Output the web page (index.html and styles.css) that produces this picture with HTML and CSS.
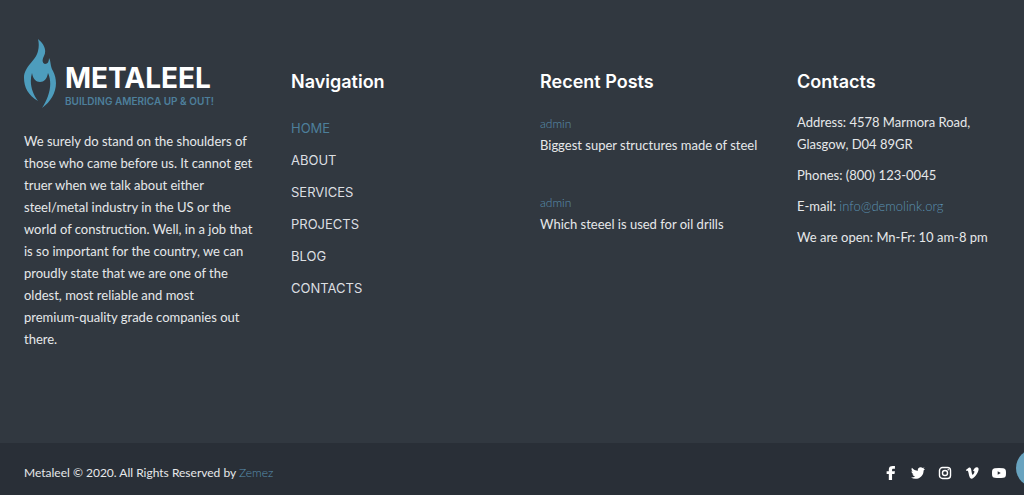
FILE: index.html
```html
<!DOCTYPE html>
<html lang="en">
<head>
    <meta charset="UTF-8">
    <meta name="viewport" content="width=device-width, initial-scale=1.0">
    <title>Metaleel</title>
    <link rel="stylesheet" href="styles.css">
</head>
<body>
    <footer class="footer">
        <div class="footer-main">
            <div class="footer-about">
                <a class="brand" href="#">
                    <svg class="brand-flame" viewBox="0 0 32 69" aria-hidden="true">
                        <path d="M14 0C20 5 23 11 20 17C18 21 18 24 21 25C24 25 25 22 25 19C27 22 26 27 29 32C36 46 30 60 18 69C25 58 29 45 24 34C23 40 20 43 16 43C12 43 9 40 8 34C5 44 8 54 14 62C4 56 0 48 0 39C0 27 12 22 14 12C15 8 15 4 14 0Z"/>
                    </svg>
                    <span class="brand-text">
                        <span class="brand-name">METALEEL</span>
                        <span class="brand-slogan">BUILDING AMERICA UP &amp; OUT!</span>
                    </span>
                </a>
                <p>We surely do stand on the shoulders of those who came before us. It cannot get truer when we talk about either steel/metal industry in the US or the world of construction. Well, in a job that is so important for the country, we can proudly state that we are one of the oldest, most reliable and most <span class="nowrap">premium-quality</span> grade companies out there.</p>
            </div>

            <nav class="footer-col">
                <h2>Navigation</h2>
                <ul class="nav-list">
                    <li><a class="active" href="#">HOME</a></li>
                    <li><a href="#">ABOUT</a></li>
                    <li><a href="#">SERVICES</a></li>
                    <li><a href="#">PROJECTS</a></li>
                    <li><a href="#">BLOG</a></li>
                    <li><a href="#">CONTACTS</a></li>
                </ul>
            </nav>

            <div class="footer-col">
                <h2>Recent Posts</h2>
                <article class="post">
                    <a class="post-author" href="#">admin</a>
                    <a class="post-title" href="#">Biggest super structures made of steel</a>
                </article>
                <article class="post">
                    <a class="post-author" href="#">admin</a>
                    <a class="post-title" href="#">Which steeel is used for oil drills</a>
                </article>
            </div>

            <div class="footer-col contacts">
                <h2>Contacts</h2>
                <p>Address: 4578 Marmora Road, Glasgow, D04 89GR</p>
                <p>Phones: (800) 123-0045</p>
                <p>E-mail: <a href="mailto:info@demolink.org">info@demolink.org</a></p>
                <p>We are open: Mn-Fr: 10 am-8 pm</p>
            </div>
        </div>

        <div class="footer-bottom">
            <p>Metaleel © 2020. All Rights Reserved by <a href="#">Zemez</a></p>
            <div class="social">
                <a href="#" aria-label="Facebook">
                    <svg viewBox="0 0 16 16"><path d="M5.500 16V9H3V6H5.500V4C5.500 1.300 7 0 10 0H12.500V3H10.800C9.600 3 9.200 3.500 9.200 4.500V6H12.500L12 9H9.200V16Z"/></svg>
                </a>
                <a href="#" aria-label="Twitter">
                    <svg viewBox="0 0 16 16"><path d="M16 3.500L14.400 5C14.500 10 10.900 14.500 5 14.500C3.200 14.500 1.500 14 0 13.100C1.800 13.200 3.400 12.700 4.700 11.700C3.200 11.600 2.100 10.700 1.700 9.400H3.100C1.500 9 .500 7.700 .500 6.100L2 6.500C.500 5.400 .200 3.600 1.100 2.100C2.800 4.200 5.200 5.400 7.900 5.500C7.300 3 9 1.400 11 1.400C12 1.400 12.800 1.800 13.400 2.400L15.500 1.600L14.100 3.400Z"/></svg>
                </a>
                <a href="#" aria-label="Instagram">
                    <svg viewBox="0 0 16 16"><rect class="line" x="1.700" y="1.700" width="12.600" height="12.600" rx="3.500"/><circle class="line" cx="8" cy="8" r="2.900"/><circle cx="11.700" cy="4.300" r=".9"/></svg>
                </a>
                <a href="#" aria-label="Vimeo">
                    <svg viewBox="0 0 16 16"><path d="M1 4.500L4.600 1.800C6.200 1.200 6.900 2.500 7.200 4.500C7.700 7.800 8.100 10 8.700 10C9.300 10 10.700 7.600 10.800 6.500C10.900 5.500 10.100 5.400 9.200 5.800C10.100 2.900 11.800 1.400 13.700 1.500C15.200 1.600 15.700 2.700 15.500 4.300C15.100 7.900 10.200 14.500 7.500 14.500C5.100 14.500 4.700 10.700 3.900 7.500C3.500 5.700 3.200 5 1.900 5.700Z"/></svg>
                </a>
                <a href="#" aria-label="YouTube">
                    <svg viewBox="0 0 16 16"><path fill-rule="evenodd" d="M3 2.500Q8 2 13 2.500Q15.500 2.700 15.800 5Q16.200 8 15.800 11Q15.500 13.300 13 13.500Q8 14 3 13.500Q.500 13.300 .200 11Q-.200 8 .200 5Q.500 2.700 3 2.500ZM6.500 6V10L10 8Z"/></svg>
                </a>
            </div>
        </div>
    </footer>

    <a class="to-top" href="#" aria-label="Back to top"></a>
</body>
</html>
```
FILE: styles.css
```css
* {
    box-sizing: border-box;
    margin: 0;
    padding: 0;
}

body {
    font-family: Lato, "Liberation Sans", sans-serif;
    font-size: 13px;
    line-height: 22px;
    color: #e6e8ea;
    background-color: #313840;
    overflow-x: hidden;
}

a {
    color: #5a91b0;
    text-decoration: none;
}

.nowrap {
    white-space: nowrap;
}

.footer {
    display: flex;
    flex-direction: column;
    min-height: 100vh;
}

.footer-main {
    flex: 1;
    display: grid;
    grid-template-columns: 237fr 219fr 227fr 203fr;
    gap: 30px;
    padding: 39px 24px 60px;
}

.brand {
    display: flex;
    gap: 9px;
    margin-bottom: 20px;
}

.brand-flame {
    width: 32px;
    height: 69px;
    fill: #4d9dbd;
}

.brand-text {
    display: flex;
    flex-direction: column;
    padding-top: 25px;
    font-family: Inter, "Liberation Sans", sans-serif;
    white-space: nowrap;
}

.brand-name {
    font-size: 28px;
    font-weight: 700;
    line-height: 28px;
    color: #fff;
}

.brand-slogan {
    font-size: 10px;
    font-weight: 600;
    line-height: 18px;
    color: #4d7f9b;
}

.footer-col {
    padding-top: 31px;
}

.footer-col h2 {
    margin-bottom: 17px;
    font-family: Inter, "Liberation Sans", sans-serif;
    font-size: 18px;
    font-weight: 600;
    line-height: 24px;
    color: #fff;
}

.nav-list {
    padding-top: 6px;
    list-style: none;
    font-family: Inter, "Liberation Sans", sans-serif;
}

.nav-list li {
    margin-bottom: 10px;
}

.nav-list a {
    color: #dcdfe2;
}

.nav-list .active {
    color: #4d7f9b;
}

.post {
    display: flex;
    flex-direction: column;
    padding-top: 3px;
    margin-bottom: 34px;
}

.post-title {
    color: #e6e8ea;
}

.post-author {
    font-size: 12px;
    font-weight: 300;
    line-height: 20px;
}

.contacts p {
    margin-bottom: 9px;
}

.contacts a {
    font-weight: 300;
}

.footer-bottom {
    display: flex;
    align-items: center;
    justify-content: space-between;
    padding: 19px 18px 11px 24px;
    font-size: 12px;
    background-color: #292f37;
}

.footer-bottom p a {
    font-weight: 300;
}

.social {
    display: flex;
    gap: 13px;
}

.social svg {
    display: block;
    width: 14px;
    height: 14px;
    fill: #fff;
}

.social .line {
    fill: none;
    stroke: #fff;
    stroke-width: 1.6;
}

/* scroll button, half outside the window */
.to-top {
    position: fixed;
    right: -30px;
    bottom: 8px;
    width: 38px;
    height: 38px;
    border-radius: 50%;
    background-color: #68a3bf;
}
```
